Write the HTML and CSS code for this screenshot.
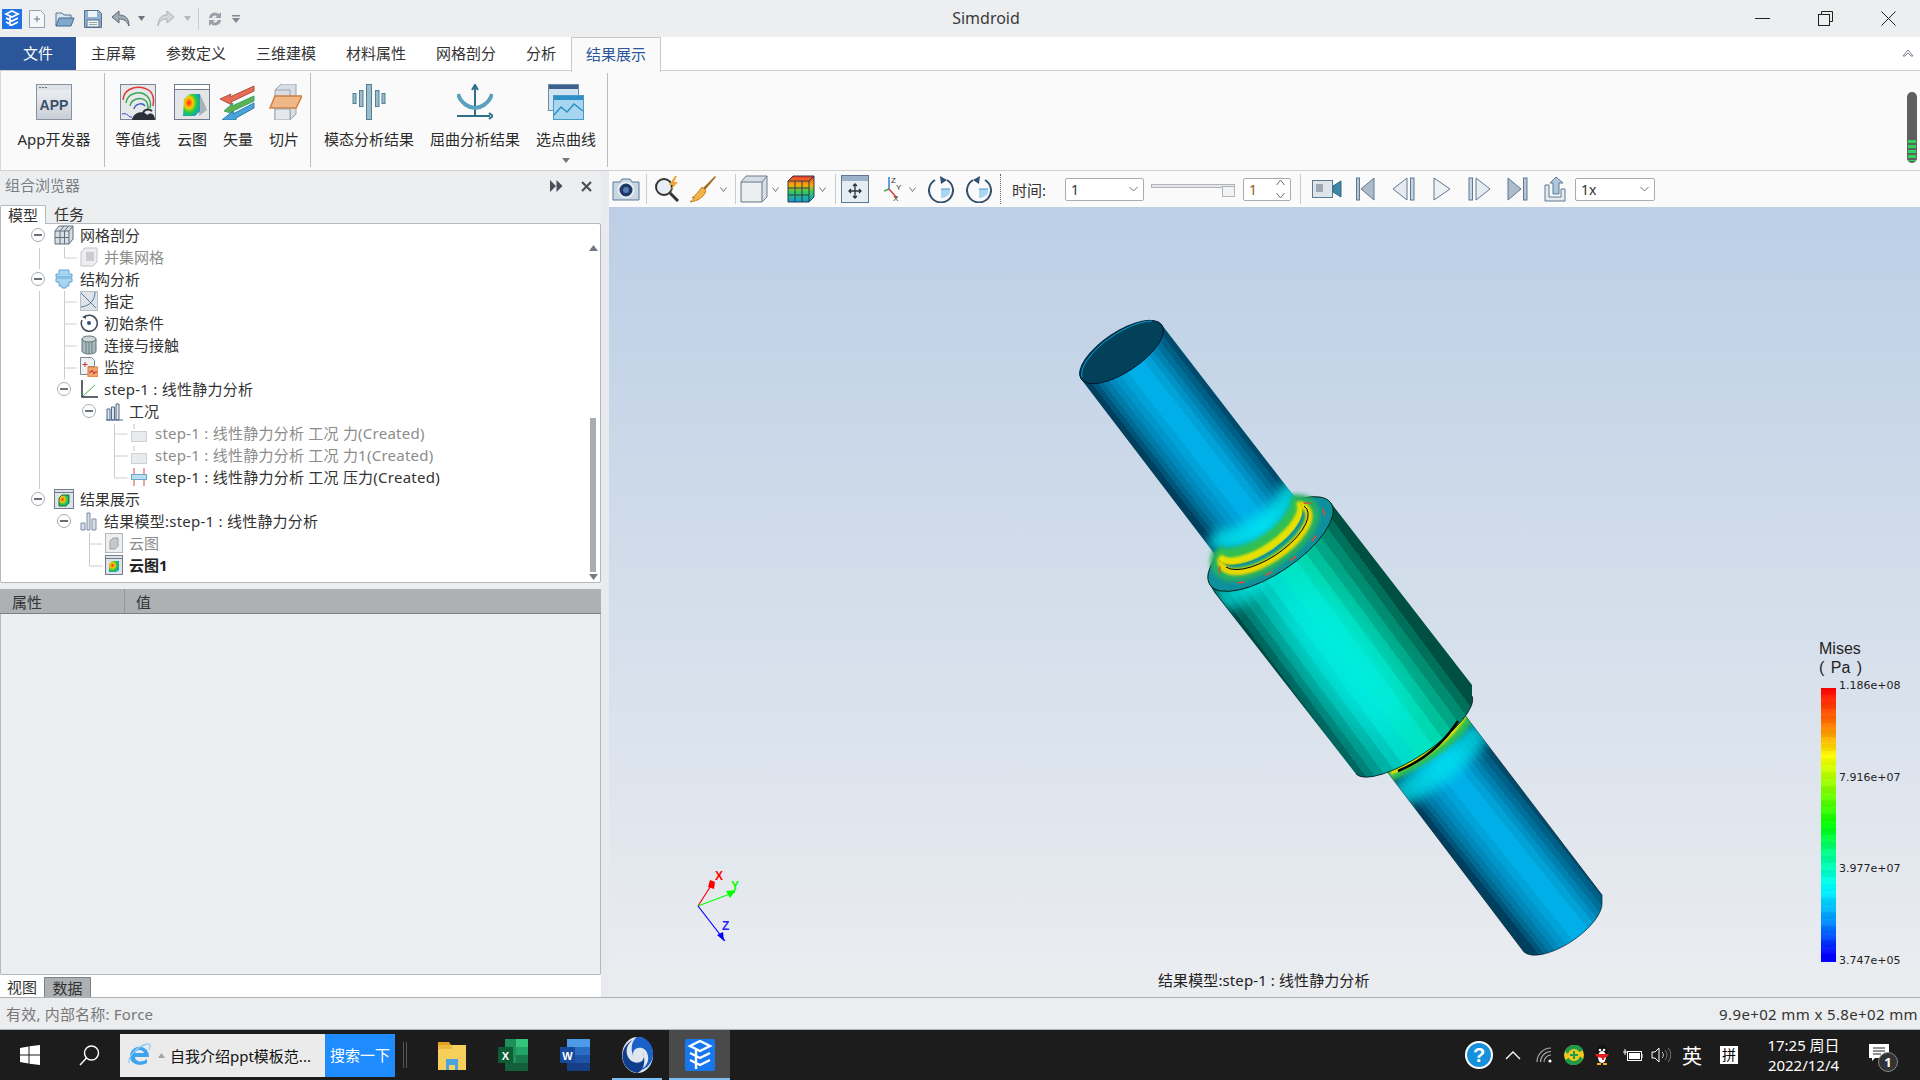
FILE: index.html
```html
<!DOCTYPE html>
<html lang="zh-CN">
<head>
<meta charset="utf-8">
<title>Simdroid</title>
<link rel="stylesheet" href="styles.css">
</head>
<body>
<div class="app">

<header class="titlebar">
  <div class="qat">
    <svg class="q0" width="20" height="20" viewBox="0 0 20 20"><rect width="20" height="20" fill="#1f72e8"/><path d="M4 5l6-3 6 3-6 3zM4 9l6 3 6-3M4 13l6 3 6-3M8 8v9" fill="none" stroke="#fff" stroke-width="1.8"/></svg>
    <svg class="q1" width="18" height="18" viewBox="0 0 18 18"><path d="M1.500 .5h11l4 4v13h-15z" fill="#f6f7f9" stroke="#8fa0b2"/><path d="M9 6v6M6 9h6" stroke="#66788c"/></svg>
    <svg class="q2" width="20" height="18" viewBox="0 0 20 18"><path d="M1 16V3h6l2 2h7v3" fill="#d8e4ef" stroke="#55728e"/><path d="M1 16l3-8h15l-3 8z" fill="#7fa8cc" stroke="#45688a"/></svg>
    <svg class="q3" width="18" height="18" viewBox="0 0 18 18"><path d="M.5.500h14l3 3v14H.500z" fill="#8fb0cf" stroke="#55728e"/><rect x="4" y="1" width="9" height="6" fill="#eef3f7"/><rect x="3" y="10" width="12" height="7" fill="#f4f6f8" stroke="#55728e"/><path d="M5 12.500h8M5 14.500h8" stroke="#8aa"/></svg>
    <svg class="q4" width="19" height="18" viewBox="0 0 19 18"><path d="M8 1L1 7l7 6V9c5 0 8 2 10 7 0-7-3-11-10-11z" fill="#9fa9b5" stroke="#5d6b7a"/></svg>
    <svg class="q5" width="7" height="5" viewBox="0 0 7 5"><path d="M0 0h7L3.500 5z" fill="#6b7480"/></svg>
    <svg class="q6" width="18" height="18" viewBox="0 0 18 18"><path d="M10 1l7 6-7 6V9C5 9 2 11 1 16c0-7 3-11 9-11z" fill="#d3d7dc" stroke="#aab1b9"/></svg>
    <svg class="q7" width="7" height="5" viewBox="0 0 7 5"><path d="M0 0h7L3.500 5z" fill="#b4b9bf"/></svg>
    <span class="q-sep"></span>
    <svg class="q8" width="16" height="18" viewBox="0 0 16 18"><path d="M2 8a6 6 0 0 1 10-4l2-2v6H8l2-2a3.500 3.500 0 0 0-5 2zM14 10a6 6 0 0 1-10 4l-2 2v-6h6l-2 2a3.500 3.500 0 0 0 5-2z" fill="#9aa1a8"/></svg>
    <svg class="q9" width="8" height="8" viewBox="0 0 8 8"><path d="M0 0h8v1.500H0zM0 3h8L4 8z" fill="#7f8790"/></svg>
  </div>
  <div class="app-title">Simdroid</div>
  <div class="win-controls">
    <span class="wc"><svg width="15" height="15" viewBox="0 0 15 15"><path d="M0 7.500h15" stroke="#222"/></svg></span>
    <span class="wc"><svg width="15" height="15" viewBox="0 0 15 15"><path d="M3.500 3V.500h11v10H12" fill="none" stroke="#222"/><rect x=".5" y="3.500" width="11" height="11" fill="none" stroke="#222"/></svg></span>
    <span class="wc"><svg width="15" height="15" viewBox="0 0 15 15"><path d="M.5.500l14 14M14.500.500l-14 14" stroke="#222"/></svg></span>
  </div>
</header>

<nav class="tabs">
  <div class="tab tab-file">文件</div>
  <div class="tab">主屏幕</div>
  <div class="tab">参数定义</div>
  <div class="tab">三维建模</div>
  <div class="tab">材料属性</div>
  <div class="tab">网格剖分</div>
  <div class="tab">分析</div>
  <div class="tab tab-active">结果展示</div>
  <svg class="collapse" width="12" height="9" viewBox="0 0 12 9"><path d="M1 8l5-6 5 6-2 0-3-3-3 3z" fill="#fff" stroke="#77808a"/></svg>
</nav>

<section class="ribbon">
  <div class="rgroup g1">
    <div class="ritem">
      <svg class="ricon" width="36" height="36" viewBox="0 0 36 36"><defs><linearGradient id="appg" x1="0" y1="0" x2="0" y2="1"><stop offset="0" stop-color="#f2f4f6"/><stop offset="1" stop-color="#c9ced6"/></linearGradient></defs><rect x=".5" y=".5" width="35" height="35" fill="url(#appg)" stroke="#8793a3"/><rect x="1" y="1" width="34" height="5" fill="#dfe3e8"/><path d="M3 3.500h2M6 3.500h2M9 3.500h2" stroke="#6b7684"/><text x="18" y="26" class="app-glyph">APP</text></svg>
      <span>App开发器</span>
    </div>
  </div>
  <div class="rgroup g2">
    <div class="ritem">
      <svg class="ricon" width="36" height="36" viewBox="0 0 36 36"><rect x=".5" y=".5" width="35" height="35" fill="#e6e8ea" stroke="#7a8796"/><path d="M3 16C4 3 20 0 30 7c4 4 4 10 3 15" fill="none" stroke="#e23a32" stroke-width="1.500"/><path d="M6 19C7 9 20 6 27 12c3 3 4 8 3 12" fill="none" stroke="#3aa654" stroke-width="1.500"/><path d="M10 22c1-7 11-10 16-5 2 2 2 6 2 9" fill="none" stroke="#3aa654" stroke-width="1.500"/><path d="M14 25c1-5 8-7 11-3" fill="none" stroke="#3a5ec8" stroke-width="1.500"/><path d="M2 30c5-2 7 4 10 3" fill="none" stroke="#3a3ec8"/><path d="M12 36c1-8 12-10 15-5 3-3 8-2 8 5z" fill="#2b2f38"/><path d="M23 30c0-4 5-6 9-3" fill="none" stroke="#2b2f38" stroke-width="2"/></svg>
      <span>等值线</span>
    </div>
    <div class="ritem narrow">
      <svg class="ricon" width="36" height="36" viewBox="0 0 36 36"><defs><radialGradient id="cloudg" cx=".35" cy=".4" r=".8"><stop offset="0" stop-color="#f22"/><stop offset=".3" stop-color="#fc0"/><stop offset=".55" stop-color="#2c4"/><stop offset="1" stop-color="#18f"/></radialGradient></defs><rect x=".5" y=".5" width="35" height="35" fill="#e3e5e8" stroke="#6f7d8e"/><rect x="1" y="1" width="34" height="4" fill="#fff"/><path d="M1 5.500h34" stroke="#6f7d8e"/><path d="M26 10l7 16-8 6z" fill="#aab0b7"/><path d="M10 15l6-5h10v17l-5 5H9z" fill="url(#cloudg)"/></svg>
      <span>云图</span>
    </div>
    <div class="ritem narrow">
      <svg class="ricon" width="36" height="36" viewBox="0 0 36 36"><path d="M0 15l11-5-1 3 24-11v5L11 18l1 3z" fill="#e96a55" stroke="#a54"/><path d="M4 27l9-8-1 3 22-10v5L13 27l1 3z" fill="#5fb04f" stroke="#3a7"/><path d="M2 36l11-9v3l21-11v5L16 34v2z" fill="#4aa4dc" stroke="#37a"/></svg>
      <span>矢量</span>
    </div>
    <div class="ritem narrow">
      <svg class="ricon cut" width="36" height="36" viewBox="0 0 36 36"><path d="M9 6l6-6h15v30l-6 6H9z" fill="#d8dde3" stroke="#9aa5b0"/><path d="M9 6h15v30" fill="none" stroke="#9aa5b0"/><path d="M9 12L4 24h26l6-12z" fill="#f0b888" stroke="#d07f3f" stroke-width="1.500"/><path d="M9 25h15v11H9z" fill="#e5e8ec" stroke="#9aa5b0"/></svg>
      <span>切片</span>
    </div>
  </div>
  <div class="rgroup g3">
    <div class="ritem">
      <svg class="ricon" width="36" height="36" viewBox="0 0 36 36"><g fill="#9dbccb" stroke="#4f8097"><rect x="15.500" y=".5" width="5" height="35"/><rect x="8.500" y="6.500" width="3.500" height="16"/><rect x="24.500" y="6.500" width="3.500" height="16"/><rect x="2" y="9.500" width="3" height="10"/><rect x="31" y="9.500" width="3" height="10"/></g></svg>
      <span>模态分析结果</span>
    </div>
    <div class="ritem">
      <svg class="ricon" width="36" height="36" viewBox="0 0 36 36"><path d="M18 33V2M15 6l3-5 3 5" fill="none" stroke="#2c6f86" stroke-width="2"/><path d="M0 32h33M32 29l4 3-4 3" fill="none" stroke="#2c6f86" stroke-width="2"/><path d="M1 10c3 10 12 14 17 14s14-4 17-14" fill="none" stroke="#5aa0c0" stroke-width="4"/></svg>
      <span>屈曲分析结果</span>
    </div>
    <div class="ritem">
      <svg class="ricon" width="36" height="36" viewBox="0 0 36 36"><rect x=".5" y=".5" width="30" height="26" fill="#cfe3f3" stroke="#6c8cab"/><rect x="1" y="1" width="29" height="4" fill="#3c5f8e"/><rect x="5.500" y="11.500" width="30" height="24" fill="#a6d6f0" stroke="#4a9ac8"/><rect x="6" y="12" width="29" height="4" fill="#2f8fc8"/><path d="M6 31l7-8 6 5 7-8 9 7" fill="none" stroke="#2f8fc8" stroke-width="1.500"/></svg>
      <span>选点曲线</span>
      <svg class="more" width="8" height="5" viewBox="0 0 8 5"><path d="M0 0h8L4 5z" fill="#777"/></svg>
    </div>
  </div>
  <div class="pill"><i></i></div>
</section>

<main class="main">
  <aside class="left">
    <div class="browser-head">
      <span class="browser-title">组合浏览器</span>
      <svg width="13" height="12" viewBox="0 0 13 12"><path d="M0 0l6 6-6 6zM6.500 0l6 6-6 6z" fill="#4a5058"/></svg>
      <svg class="head-x" width="11" height="11" viewBox="0 0 11 11"><path d="M1 1l9 9M10 1l-9 9" stroke="#4a5058" stroke-width="2.200"/></svg>
    </div>
    <div class="mini-tabs">
      <span class="mini-tab on">模型</span><span class="mini-tab">任务</span>
    </div>
    <div class="tree">
      <svg class="tree-lines" width="590" height="360" viewBox="0 223 590 360"><path d="M38.500 247v21M38.500 290v198M63.500 246v11h12M63.500 290v88M63.500 301h12M63.500 323h12M63.500 345h12M63.500 367h12M113.500 423v54h13M113.500 433h13M113.500 455h13M88.500 532v33h13M88.500 543h13" fill="none" stroke="#c9ccd0"/></svg>

      <div class="row l1"><i class="exp"></i>
        <svg class="ti" width="20" height="20" viewBox="0 0 20 20"><path d="M1 6l4-5h14v13l-4 5H1z" fill="#d9dee3" stroke="#5f6d7c"/><path d="M1 6h14v13M15 6l4-5M6 6v13M10.500 6v13M1 12.500h14M6 6l4-5M10.500 6l4-5" fill="none" stroke="#5f6d7c"/></svg>
        <span>网格剖分</span></div>
      <div class="row l2 dim">
        <svg class="ti" width="18" height="20" viewBox="0 0 18 20"><path d="M1 5l4-4h12v14l-4 4H1z" fill="#eee" stroke="#c0c4c8"/><rect x="6" y="5" width="8" height="9" fill="#c9cdd1"/></svg>
        <span>并集网格</span></div>
      <div class="row l1"><i class="exp"></i>
        <svg class="ti" width="20" height="20" viewBox="0 0 20 20"><path d="M5 1h10v4h3v3H2V5h3zM2 9h16v4h-3v4h-3v2H8v-2H5v-4H2z" fill="#a9d4ef" stroke="#60a8d8"/></svg>
        <span>结构分析</span></div>
      <div class="row l2">
        <svg class="ti" width="18" height="20" viewBox="0 0 18 20"><rect x=".5" y=".5" width="17" height="19" fill="#dfe3e8" stroke="#b7bfc8"/><path d="M1 2l15 15M15 1c0 8-5 14-14 15" fill="none" stroke="#4d7fa8"/></svg>
        <span>指定</span></div>
      <div class="row l2">
        <svg class="ti" width="18" height="20" viewBox="0 0 18 20"><path d="M6 3a8 8 0 1 1-4 4" fill="none" stroke="#3e4a5c" stroke-width="1.500"/><circle cx="9" cy="10" r="2" fill="#2f4f7f"/><path d="M2 4l4-2v4z" fill="#3e4a5c"/></svg>
        <span>初始条件</span></div>
      <div class="row l2">
        <svg class="ti" width="18" height="20" viewBox="0 0 18 20"><path d="M2 4v12c0 4 14 4 14 0V4" fill="#a9b8bc" stroke="#5f7278"/><ellipse cx="9" cy="4" rx="7" ry="3" fill="#cdd6d8" stroke="#5f7278"/><path d="M6 7v11M9 7v12M12 7v11" stroke="#6f8388"/></svg>
        <span>连接与接触</span></div>
      <div class="row l2">
        <svg class="ti" width="18" height="20" viewBox="0 0 18 20"><path d="M.5.500h11l3 3v6h-6v8H.5z" fill="#eef0f3" stroke="#7c8894"/><path d="M5 5v5M2.500 7.500h5" stroke="#c33"/><rect x="8" y="10" width="10" height="10" fill="#f4a36c" stroke="#d97a3a"/><path d="M9 15h2l1-2 2 4 1-2h2" fill="none" stroke="#a33"/></svg>
        <span>监控</span></div>
      <div class="row l2"><i class="exp"></i>
        <svg class="ti" width="18" height="20" viewBox="0 0 18 20"><path d="M2 1v17h16" fill="none" stroke="#2a3440" stroke-width="1.500"/><path d="M3 17L15 6" stroke="#4caf50"/></svg>
        <span class="wide">step-1 : 线性静力分析</span></div>
      <div class="row l3"><i class="exp"></i>
        <svg class="ti" width="18" height="20" viewBox="0 0 18 20"><path d="M1 19h17M2 8h3v11H2zM6.500 6h3v13h-3zM11 3h3v16h-3z" fill="#dfe5ec" stroke="#4f6a88"/></svg>
        <span>工况</span></div>
      <div class="row l4 dim">
        <svg class="ti t16" width="16" height="20" viewBox="0 0 16 20"><path d="M3 1v5" stroke="#c0c4c8"/><rect x=".5" y="8.500" width="15" height="10" fill="#e8eaec" stroke="#cdd0d4"/></svg>
        <span class="wide">step-1 : 线性静力分析 工况 力(Created)</span></div>
      <div class="row l4 dim">
        <svg class="ti t16" width="16" height="20" viewBox="0 0 16 20"><path d="M3 1v5" stroke="#c0c4c8"/><rect x=".5" y="8.500" width="15" height="10" fill="#e8eaec" stroke="#cdd0d4"/></svg>
        <span class="wide">step-1 : 线性静力分析 工况 力1(Created)</span></div>
      <div class="row l4">
        <svg class="ti t16" width="16" height="20" viewBox="0 0 16 20"><path d="M3 1v6M13 1v6M3 13v6M13 13v6" stroke="#d84a3a"/><rect x=".5" y="7.500" width="15" height="5" fill="#bcdcf0" stroke="#6ba8d0"/></svg>
        <span class="wide">step-1 : 线性静力分析 工况 压力(Created)</span></div>
      <div class="row l1"><i class="exp"></i>
        <svg class="ti" width="20" height="20" viewBox="0 0 20 20"><rect x=".5" y=".5" width="19" height="19" fill="#dfe2e6" stroke="#6f7d8e"/><path d="M1 3.500h18" stroke="#6f7d8e"/><path d="M5 9l3-3h7v8l-3 3H5z" fill="url(#cloudg)" stroke="#272"/></svg>
        <span>结果展示</span></div>
      <div class="row l2"><i class="exp"></i>
        <svg class="ti" width="18" height="20" viewBox="0 0 18 20"><path d="M1 12h4v7H1zM7 2h3v17H7zM12 8h4v11h-4z" fill="#d8dee5" stroke="#7c8fa3"/></svg>
        <span class="wide">结果模型:step-1 : 线性静力分析</span></div>
      <div class="row l3 dim">
        <svg class="ti" width="18" height="20" viewBox="0 0 18 20"><rect x=".5" y=".5" width="17" height="19" fill="#eceeef" stroke="#b2b6ba"/><path d="M5 8l3-3h5v8l-3 3H5z" fill="#c6c9cc" stroke="#9ea2a6"/></svg>
        <span>云图</span></div>
      <div class="row l3 strong">
        <svg class="ti" width="18" height="20" viewBox="0 0 18 20"><rect x=".5" y=".5" width="17" height="19" fill="#dfe2e6" stroke="#6f7d8e"/><path d="M1 3.500h16" stroke="#6f7d8e"/><path d="M4 9l3-3h7v9l-3 2H4z" fill="url(#cloudg)"/></svg>
        <span>云图1</span></div>

      <svg class="sb-up" width="9" height="6" viewBox="0 0 9 6"><path d="M4.500 0l4.500 6H0z" fill="#6f7a86"/></svg>
      <i class="sb-thumb"></i>
      <svg class="sb-down" width="9" height="6" viewBox="0 0 9 6"><path d="M4.500 6L9 0H0z" fill="#6f7a86"/></svg>
    </div>
    <div class="prop-head"><span class="prop-a">属性</span><span class="prop-b">值</span></div>
    <div class="prop-body"></div>
    <div class="bottom-tabs"><span class="btab">视图</span><span class="btab on">数据</span></div>
  </aside>

  <section class="work">
    <div class="toolbar">
      <svg class="tb m3" width="28" height="24" viewBox="0 0 28 24"><path d="M1 5h7l2-3h8l2 3h7v18H1z" fill="#c8d6e6" stroke="#5f7892"/><circle cx="14" cy="13" r="7.500" fill="#1f3a68" stroke="#e8eef4" stroke-width="2"/><circle cx="14" cy="13" r="3" fill="#5a7cb0"/></svg>
      <i class="tsep m6"></i>
      <svg class="tb m6" width="29" height="26" viewBox="0 0 29 26"><circle cx="11" cy="11" r="8" fill="#e6edf3" stroke="#333" stroke-width="2"/><path d="M17 17l8 8" stroke="#333" stroke-width="3"/><path d="M22 0l-6 9h4l-3 6 8-9h-4l3-6z" fill="#f0a43a"/></svg>
      <svg class="tb m7" width="28" height="28" viewBox="0 0 28 28"><path d="M26 1l1 1-11 13-2-2z" fill="#a06a20"/><path d="M13 12l4 4c-2 6-8 10-16 11 3-2 5-5 5-5l-3 1c3-2 6-6 10-11z" fill="#f2b34a" stroke="#c58420"/></svg>
      <svg class="tar m3" width="7" height="7" viewBox="0 0 7 7"><path d="M.5 1.500l3 4 3-4" fill="none" stroke="#6a7480"/></svg>
      <i class="tsep m8"></i>
      <svg class="tb m4" width="28" height="28" viewBox="0 0 28 28"><path d="M1 7l5-6h21v21l-5 5H1z" fill="#d8dde3" stroke="#6f7d8e"/><path d="M1 7h21v20M22 7l5-6" fill="none" stroke="#6f7d8e"/><rect x="2" y="8" width="19" height="18" fill="#eceff2"/></svg>
      <svg class="tar m4" width="7" height="7" viewBox="0 0 7 7"><path d="M.5 1.500l3 4 3-4" fill="none" stroke="#6a7480"/></svg>
      <svg class="tb m8" width="28" height="28" viewBox="0 0 28 28"><defs><linearGradient id="meshg" x1="0" y1="0" x2="0" y2="1"><stop offset="0" stop-color="#e33"/><stop offset=".35" stop-color="#fa0"/><stop offset=".6" stop-color="#3c5"/><stop offset="1" stop-color="#19d"/></linearGradient></defs><path d="M1 6l5-5h21v21l-5 5H1z" fill="url(#meshg)" stroke="#2d3a4a"/><path d="M1 6h21v21M22 6l5-5M8 6v21M15 6v21M1 13h21M1 20h21" fill="none" stroke="#2d3a4a"/></svg>
      <svg class="tar m4" width="7" height="7" viewBox="0 0 7 7"><path d="M.5 1.500l3 4 3-4" fill="none" stroke="#6a7480"/></svg>
      <i class="tsep m9"></i>
      <svg class="tb m5" width="28" height="28" viewBox="0 0 28 28"><rect x=".5" y=".5" width="27" height="27" fill="#e5ecf2" stroke="#5f7892"/><rect x="1" y="1" width="26" height="5" fill="#9db2c8"/><path d="M14 9v14M8 16h12M12 11l2-2 2 2M12 21l2 2 2-2M10 14l-2 2 2 2M18 14l2 2-2 2" fill="none" stroke="#2a3440" stroke-width="1.300"/></svg>
      <svg class="tb m13" width="21" height="28" viewBox="0 0 21 28"><path d="M7 14V2" stroke="#2a7fd8" stroke-width="1.500"/><path d="M7 14l-5 2" stroke="#3cab4a" stroke-width="1.500"/><path d="M7 14l8 9" stroke="#d83a3a" stroke-width="1.500"/><text x="9" y="8" class="axis-l">Z</text><text x="14" y="15" class="axis-l">Y</text><text x="11" y="26" class="axis-l">X</text></svg>
      <svg class="tar m6" width="7" height="7" viewBox="0 0 7 7"><path d="M.5 1.500l3 4 3-4" fill="none" stroke="#6a7480"/></svg>
      <svg class="tb m12" width="26" height="28" viewBox="0 0 26 28"><path d="M7 5a12 12 0 1 0 12 0" fill="none" stroke="#33506e" stroke-width="2"/><path d="M12 1l7 4-6 4z" fill="#33506e"/><path d="M13 14h9v4c-2 3-5 5-9 5z" fill="#a8d6f2"/><path d="M13 14h9" stroke="#4a9ac8"/></svg>
      <svg class="tb m12" width="26" height="28" viewBox="0 0 26 28"><path d="M19 5a12 12 0 1 1-12 0" fill="none" stroke="#33506e" stroke-width="2"/><path d="M14 1L7 5l6 4z" fill="#33506e"/><path d="M13 14h9v4c-2 3-5 5-9 5z" fill="#a8d6f2"/><path d="M13 14h9" stroke="#4a9ac8"/></svg>
      <i class="tsep dotted m8"></i>
      <span class="time-label m11">时间:</span>
      <div class="combo c79 m20"><span>1</span><svg width="9" height="6" viewBox="0 0 9 6"><path d="M.5 1l4 4 4-4" fill="none" stroke="#6a7480"/></svg></div>
      <div class="slider m7"><i class="track"></i><i class="handle"></i></div>
      <div class="combo spin m8"><span>1</span><svg width="9" height="20" viewBox="0 0 9 20"><path d="M.5 6l4-5 4 5M.5 14l4 5 4-5" fill="none" stroke="#6a7480"/></svg></div>
      <i class="tsep m9"></i>
      <svg class="tb m11" width="30" height="22" viewBox="0 0 30 22"><rect x=".5" y="2.500" width="20" height="17" fill="#dfe4ea" stroke="#5f7892"/><rect x="4" y="6" width="7" height="8" fill="#9da8b4"/><path d="M21 8l8-5v16l-8-5z" fill="#3f86a8" stroke="#2f6a88"/></svg>
      <svg class="tb m14" width="19" height="24" viewBox="0 0 19 24"><rect x=".5" y="1" width="3" height="22" fill="#b7c4d2" stroke="#5f7892"/><path d="M18 1v22L5 12z" fill="#aebbc9" stroke="#5f7892"/></svg>
      <svg class="tb m17" width="23" height="24" viewBox="0 0 23 24"><path d="M15 1v22L1 12z" fill="#e6ebf0" stroke="#5f7892"/><rect x="18.500" y="1" width="3.500" height="22" fill="#c8d4e0" stroke="#5f7892"/></svg>
      <svg class="tb m18" width="18" height="24" viewBox="0 0 18 24"><path d="M1 1v22l16-11z" fill="#eef1f4" stroke="#5f7892"/></svg>
      <svg class="tb m17" width="23" height="24" viewBox="0 0 23 24"><rect x="1" y="1" width="3.500" height="22" fill="#c8d4e0" stroke="#5f7892"/><path d="M8 1v22l14-11z" fill="#e6ebf0" stroke="#5f7892"/></svg>
      <svg class="tb m16" width="21" height="24" viewBox="0 0 21 24"><path d="M1 1v22l13-11z" fill="#aebbc9" stroke="#5f7892"/><rect x="16.500" y="1" width="3.500" height="22" fill="#b7c4d2" stroke="#5f7892"/></svg>
      <svg class="tb m16" width="24" height="26" viewBox="0 0 24 26"><path d="M1 9v16h20V13h-4v8H5V9z" fill="#e4eaf0" stroke="#5f7892"/><path d="M9 18V7H6l6-6 7 6h-4v11z" fill="#aec6dc" stroke="#5f7892"/></svg>
      <div class="combo c80 m7"><span>1x</span><svg width="9" height="6" viewBox="0 0 9 6"><path d="M.5 1l4 4 4-4" fill="none" stroke="#6a7480"/></svg></div>
    </div>

    <div class="viewport">
      <svg class="scene" width="1311" height="789" viewBox="609 208 1311 789">
        <defs>
          <linearGradient id="c1" gradientUnits="userSpaceOnUse" x1="1086" y1="385" x2="1162" y2="326">
            <stop offset="0" stop-color="#003f5e"/><stop offset=".05" stop-color="#003f5e"/><stop offset=".05" stop-color="#00567a"/><stop offset=".1" stop-color="#00567a"/><stop offset=".1" stop-color="#006a92"/><stop offset=".15" stop-color="#006a92"/><stop offset=".15" stop-color="#007ba8"/><stop offset=".21" stop-color="#007ba8"/><stop offset=".21" stop-color="#0089ba"/><stop offset=".27" stop-color="#0089ba"/><stop offset=".27" stop-color="#0096ca"/><stop offset=".34" stop-color="#0096ca"/><stop offset=".34" stop-color="#00a2da"/><stop offset=".42" stop-color="#00a2da"/><stop offset=".42" stop-color="#00aee8"/><stop offset=".62" stop-color="#00aee8"/><stop offset=".62" stop-color="#00a2d8"/><stop offset=".7" stop-color="#00a2d8"/><stop offset=".7" stop-color="#0092c4"/><stop offset=".76" stop-color="#0092c4"/><stop offset=".76" stop-color="#0082b0"/><stop offset=".82" stop-color="#0082b0"/><stop offset=".82" stop-color="#00709a"/><stop offset=".88" stop-color="#00709a"/><stop offset=".88" stop-color="#005f86"/><stop offset=".94" stop-color="#005f86"/><stop offset=".94" stop-color="#004b6c"/><stop offset="1" stop-color="#004b6c"/>
          </linearGradient>
          <linearGradient id="c3" href="#c1" gradientUnits="userSpaceOnUse" x1="1388" y1="775" x2="1463" y2="715"/>
          <linearGradient id="b1" gradientUnits="userSpaceOnUse" x1="1212" y1="592" x2="1331" y2="504">
            <stop offset="0" stop-color="#004a44"/><stop offset=".04" stop-color="#004a44"/><stop offset=".04" stop-color="#006660"/><stop offset=".09" stop-color="#006660"/><stop offset=".09" stop-color="#008278"/><stop offset=".14" stop-color="#008278"/><stop offset=".14" stop-color="#009a8e"/><stop offset=".2" stop-color="#009a8e"/><stop offset=".2" stop-color="#00b2a6"/><stop offset=".27" stop-color="#00b2a6"/><stop offset=".27" stop-color="#00c8bc"/><stop offset=".34" stop-color="#00c8bc"/><stop offset=".34" stop-color="#00dccc"/><stop offset=".44" stop-color="#00dccc"/><stop offset=".44" stop-color="#00e4c4"/><stop offset=".58" stop-color="#00e4c4"/><stop offset=".58" stop-color="#00d8b0"/><stop offset=".66" stop-color="#00d8b0"/><stop offset=".66" stop-color="#00c09a"/><stop offset=".74" stop-color="#00c09a"/><stop offset=".74" stop-color="#00a686"/><stop offset=".81" stop-color="#00a686"/><stop offset=".81" stop-color="#008c70"/><stop offset=".88" stop-color="#008c70"/><stop offset=".88" stop-color="#00705a"/><stop offset=".94" stop-color="#00705a"/><stop offset=".94" stop-color="#005042"/><stop offset="1" stop-color="#005042"/>
          </linearGradient>
          <filter id="blur6" x="-30%" y="-30%" width="160%" height="160%"><feGaussianBlur stdDeviation="6"/></filter>
          <filter id="blur2" x="-30%" y="-30%" width="160%" height="160%"><feGaussianBlur stdDeviation="2"/></filter>
          <filter id="blur1" x="-30%" y="-30%" width="160%" height="160%"><feGaussianBlur stdDeviation="1"/></filter>
          <filter id="blur16" x="-50%" y="-50%" width="200%" height="200%"><feGaussianBlur stdDeviation="16"/></filter>
          <clipPath id="clipU"><path d="M1081 380L1220 562A47 20 -34 0 0 1300 505L1162 326Z"/></clipPath>
          <clipPath id="clipL"><path d="M1370 750L1524 953A47 20 -34 0 0 1602 903V896L1445 690Z"/></clipPath>
          <clipPath id="clipB"><path d="M1210 586L1356 775A70 22 -34 0 0 1472 697V686L1331 504Z"/></clipPath>
        </defs>

        <!-- lower shaft -->
        <path d="M1370 750L1524 953A47 20 -34 0 0 1602 903V896L1445 690Z" fill="url(#c3)" stroke="#023" stroke-width=".7"/>
        <g clip-path="url(#clipL)">
          <path d="M1392 800Q1450 772 1482 728" fill="none" stroke="#00e8f0" stroke-width="26" opacity=".7" filter="url(#blur6)"/>
          <path d="M1384 776Q1445 748 1466 716" fill="none" stroke="#30c050" stroke-width="18" filter="url(#blur2)"/>
          <path d="M1390 772Q1445 748 1464 714" fill="none" stroke="#e6e000" stroke-width="8" filter="url(#blur1)"/>
        </g>

        <!-- middle section -->
        <path d="M1210 586L1214 593L1356 775A70 22 -34 0 0 1472 697V686L1331 504Z" fill="url(#b1)"/>
        <g clip-path="url(#clipB)">
          <ellipse cx="1345" cy="660" rx="30" ry="90" transform="rotate(-38 1345 660)" fill="#00f0e6" opacity=".75" filter="url(#blur16)"/>
          <ellipse cx="1240" cy="590" rx="34" ry="14" transform="rotate(-34 1240 590)" fill="#00f0f0" opacity=".6" filter="url(#blur6)"/>
        </g>
        <path d="M1356 775A70 22 -34 0 0 1472 697" fill="none" stroke="#012" stroke-width=".8"/>
        <path d="M1398 772Q1435 757 1458 722" fill="none" stroke="#000" stroke-width="2.500"/>
        <ellipse cx="1270.500" cy="545" rx="73" ry="29" transform="rotate(-34 1270.500 545)" fill="#0d8f9e" stroke="#021" stroke-width=".9"/>
        <ellipse cx="1265" cy="539" rx="55" ry="24" transform="rotate(-34 1265 539)" fill="none" stroke="#28b060" stroke-width="14" filter="url(#blur2)"/>
        <ellipse cx="1265" cy="539" rx="51" ry="22" transform="rotate(-34 1265 539)" fill="none" stroke="#e8d800" stroke-width="7" filter="url(#blur1)"/>
        <ellipse cx="1272" cy="544" rx="61" ry="25" transform="rotate(-34 1272 544)" fill="none" stroke="#e0502a" stroke-width="1.500" stroke-dasharray="7 22"/>

        <!-- upper shaft -->
        <path d="M1081 380L1220 562A47 20 -34 0 0 1300 505L1162 326Z" fill="url(#c1)"/>
        <g clip-path="url(#clipU)">
          <path d="M1212 538A47 20 -34 0 0 1288 482" fill="none" stroke="#00e8f0" stroke-width="22" opacity=".8" filter="url(#blur6)"/>
          <path d="M1216 552A47 20 -34 0 0 1296 496" fill="none" stroke="#30c050" stroke-width="14" filter="url(#blur2)"/>
          <path d="M1219 558A47 20 -34 0 0 1299 502" fill="none" stroke="#e6e000" stroke-width="8" filter="url(#blur1)"/>
        </g>
        <path d="M1226 568A47 20 -34 0 0 1304 507" fill="none" stroke="#000" stroke-width="1"/>
        <ellipse cx="1121.500" cy="353" rx="48.600" ry="20" transform="rotate(-33.700 1121.500 353)" fill="#03405a" stroke="#012" stroke-width=".8"/>
        <path d="M1082 378A48.600 20 -33.700 0 1 1152 322" fill="none" stroke="#00a0d8" stroke-width="1"/>

        <!-- triad -->
        <path d="M698 907L712 885" stroke="#f00" stroke-width="1.200"/><path d="M710 881l5 2-1 7-6-2z" fill="#f00"/>
        <path d="M698 907L735 893" stroke="#0f0" stroke-width="1.200"/><path d="M726 892l10-1-6 8z" fill="#0f0"/>
        <path d="M698 907L725 942" stroke="#00f" stroke-width="1.200"/><path d="M717 936l6-3 1 9z" fill="#00f"/>
      </svg>
      <span class="axis ax-x">X</span>
      <span class="axis ax-y">Y</span>
      <span class="axis ax-z">Z</span>

      <div class="legend">
        <div class="legend-title">Mises<br>( Pa )</div>
        <div class="legend-body">
          <div class="legend-bar"></div>
          <div class="legend-vals"><span>1.186e+08</span><span>7.916e+07</span><span>3.977e+07</span><span>3.747e+05</span></div>
        </div>
      </div>
      <div class="caption">结果模型:step-1 : 线性静力分析</div>
    </div>
  </section>
</main>

<footer class="status">
  <span class="st-left">有效, 内部名称: Force</span>
  <span class="st-right">9.9e+02 mm x 5.8e+02 mm</span>
</footer>

<div class="taskbar">
  <svg class="tk-win" width="20" height="20" viewBox="0 0 20 20"><path d="M0 3l8.500-1.500V9.500H0zM9.500 1.300L20 0v9.500H9.500zM0 10.500h8.500v8L0 17zM9.500 10.500H20V20L9.500 18.700z" fill="#fff"/></svg>
  <svg class="tk-search" width="21" height="21" viewBox="0 0 21 21"><circle cx="12.500" cy="8" r="7" fill="none" stroke="#fff" stroke-width="1.400"/><path d="M7.500 13L1 20" stroke="#fff" stroke-width="1.400"/></svg>
  <div class="searchbox">
    <svg class="ie" width="23" height="24" viewBox="0 0 23 24"><path d="M2 14a9.500 9.500 0 0 1 18-5 9 9 0 0 1 1 5H7c0 5 8 6 12 2v4c-7 4-17 1-17-6zM7 10h9c-1-4-8-4-9 0z" fill="#3ea4ee"/><path d="M1 20C0 14 8 4 19 1c3-1 4 2 2 6" fill="none" stroke="#8fcdf8" stroke-width="1.300"/></svg>
    <svg class="ie-arrow" width="7" height="5" viewBox="0 0 7 5"><path d="M3.500 0L7 5H0z" fill="#a4a4a4"/></svg>
    <span class="sb-text">自我介绍ppt模板范...</span>
    <span class="sb-btn">搜索一下</span>
  </div>
  <i class="tk-sep"></i>
  <div class="tk-app a1"><svg width="28" height="30" viewBox="0 0 28 30"><path d="M0 2h11l2 3h-13z" fill="#e0a020"/><rect y="5" width="28" height="25" fill="#f7cf5c"/><path d="M0 5h13l2 4H0z" fill="#f0b83a"/><path d="M8 30V19h12v11h-3v-5h-6v5z" fill="#4aa3df"/></svg></div>
  <div class="tk-app a2"><svg width="30" height="32" viewBox="0 0 30 32"><rect x="7" y="0" width="23" height="32" fill="#1f8f5a"/><rect x="18" y="0" width="12" height="8" fill="#34c47c"/><rect x="18" y="8" width="12" height="8" fill="#22a566"/><rect x="18" y="16" width="12" height="8" fill="#187a4c"/><rect x="7" y="24" width="23" height="8" fill="#145f3c"/><rect y="8" width="15" height="16" fill="#0e5c36"/><text x="7.500" y="21" class="tile-l">X</text></svg></div>
  <div class="tk-app a3"><svg width="30" height="32" viewBox="0 0 30 32"><rect x="7" y="0" width="23" height="32" fill="#2b6cc4"/><rect x="7" y="0" width="23" height="8" fill="#4d9ae6"/><rect x="7" y="16" width="23" height="8" fill="#1f55a8"/><rect x="7" y="24" width="23" height="8" fill="#163f86"/><rect y="8" width="15" height="16" fill="#174a9c"/><text x="7.500" y="21" class="tile-l">W</text></svg></div>
  <div class="tk-app a4"><svg width="31" height="36" viewBox="0 0 31 36"><ellipse cx="15.500" cy="18" rx="15.500" ry="18" fill="#dfe6ee"/><path d="M15 0C30 0 34 16 29 25c-3 6-10 9-13 8 8-2 11-8 10-14-1-7-6-9-10-8-5 1-6 6-4 9C9 16 8 5 15 0z" fill="#1b60c8"/><path d="M15 36C2 34-3 20 3 10 5 7 8 4 11 3 5 7 3 14 6 20c3 6 10 7 14 4 3-3 2-7 0-9 4 5 3 19-5 21z" fill="#0f3f8c"/></svg><i class="under"></i></div>
  <div class="tk-app a5"><svg width="30" height="32" viewBox="0 0 30 32"><rect width="30" height="32" rx="2" fill="#1877ee"/><path d="M5 7l10-5 10 5-10 5zM5 14l10 5 10-5M5 21l10 5 10-5M11 10v20" fill="none" stroke="#fff" stroke-width="2.400"/></svg><i class="under"></i></div>

  <div class="tray">
    <svg class="t-help" width="28" height="28" viewBox="0 0 28 28"><circle cx="14" cy="14" r="13" fill="#1790dc" stroke="#fff" stroke-width="2"/><text x="14" y="21" class="help-q">?</text></svg>
    <svg class="t-chev" width="16" height="9" viewBox="0 0 16 9"><path d="M1 8l7-7 7 7" fill="none" stroke="#fff" stroke-width="1.300"/></svg>
    <svg class="t-wifi" width="16" height="16" viewBox="0 0 16 16"><path d="M1 15A14 14 0 0 1 15 1M4.500 15A10.500 10.500 0 0 1 15 4.500M8 15a7 7 0 0 1 7-7" fill="none" stroke="#aaa" stroke-width="1.200"/><circle cx="14" cy="14" r="1.600" fill="#fff"/></svg>
    <svg class="t-green" width="20" height="20" viewBox="0 0 20 20"><circle cx="10" cy="10" r="10" fill="#f0c820"/><path d="M1 6c3 6 14 2 18-1-3-7-14-7-18 1zM19 14c-3-6-14-2-18 1 3 7 14 7 18-1z" fill="#1e9a4a"/><circle cx="10" cy="10" r="6" fill="#f0c820"/><path d="M10 6v8M6 10h8" stroke="#1e9a4a" stroke-width="2"/></svg>
    <svg class="t-qq" width="16" height="20" viewBox="0 0 16 20"><ellipse cx="8" cy="8" rx="5.500" ry="8" fill="#111"/><ellipse cx="8" cy="12" rx="4" ry="6" fill="#fff"/><circle cx="6" cy="5" r="1.300" fill="#fff"/><circle cx="10" cy="5" r="1.300" fill="#fff"/><path d="M1 9h14l-2 3-3 1v2H8v-2l-5-1z" fill="#e02020"/><path d="M3 18h4v2H3zM9 18h4v2H9z" fill="#f4b020"/></svg>
    <svg class="t-batt" width="20" height="13" viewBox="0 0 20 13"><rect x="4.500" y="2.500" width="14" height="9" fill="none" stroke="#fff"/><rect x="6" y="4" width="11" height="6" fill="#fff"/><path d="M0 3h4M2 0v6M19 5v4" stroke="#fff"/></svg>
    <svg class="t-spk" width="20" height="16" viewBox="0 0 20 16"><path d="M1 5h3l4-4v14l-4-4H1z" fill="none" stroke="#fff"/><path d="M11 5a4 4 0 0 1 0 6" fill="none" stroke="#ccc"/><path d="M14 3a7 7 0 0 1 0 10M17 1a10 10 0 0 1 0 14" fill="none" stroke="#777"/></svg>
    <span class="t-lang">英</span>
    <span class="t-ime">拼</span>
    <div class="clock"><span>17:25 周日</span><span>2022/12/4</span></div>
    <div class="notify">
      <svg width="20" height="17" viewBox="0 0 20 17"><path d="M0 0h20v14H6l-3 3v-3H0z" fill="#fff"/><path d="M4 4h12M4 7h12M4 10h8" stroke="#222"/></svg>
      <span class="badge">1</span>
    </div>
  </div>
</div>

</div>
</body>
</html>
```

FILE: styles.css
```css
* { box-sizing: border-box; }
html, body { margin: 0; padding: 0; }
body {
  width: 1920px; height: 1080px; overflow: hidden;
  font-family: "Noto Sans", "Noto Sans CJK SC", sans-serif;
  font-size: 15px; color: #222; background: #eceef0;
}
svg { display: block; flex: none; }
i { display: block; }
.app { display: flex; flex-direction: column; height: 1080px; }

/* title bar */
.titlebar { display: flex; align-items: center; height: 37px; background: #eceef0; flex: none; }
.qat { display: flex; align-items: center; width: 250px; padding-left: 2px; }
.q1 { margin-left: 6px; }
.q2 { margin-left: 9px; }
.q3 { margin-left: 9px; }
.q4 { margin-left: 9px; }
.q5 { margin-left: 8px; }
.q6 { margin-left: 12px; }
.q7 { margin-left: 9px; }
.q-sep { width: 1px; height: 22px; background: #c9ccd0; margin-left: 7px; }
.q8 { margin-left: 8px; }
.q9 { margin-left: 9px; }
.app-title { flex: 1; text-align: center; font-size: 16px; color: #3a3a3a; line-height: 37px; }
.win-controls { display: flex; width: 198px; padding-left: 9px; }
.wc { display: flex; width: 63px; justify-content: center; }

/* tabs */
.tabs { display: flex; align-items: stretch; height: 33px; background: #fff; flex: none; position: relative; }
.tab { padding: 0 15px; line-height: 33px; color: #333; }
.tab-file { width: 76px; padding: 0; text-align: center; background: #2b579a; color: #fff; }
.tab-active { color: #2b579a; border: 1px solid #c9c9c9; border-bottom: 0; width: 90px; padding: 0 14px; margin-bottom: -2px; background: #fafafa; position: relative; z-index: 1; }
.collapse { margin: 11px 6px 0 auto; }

/* ribbon */
.ribbon { display: flex; height: 101px; flex: none; background: #fafafa; border-top: 1px solid #cfcfcf; border-bottom: 1px solid #cfcfcf; border-left: 1px solid #d8d8d8; padding: 2px 0 2px; position: relative; }
.rgroup { display: flex; gap: 16px; border-right: 1px solid #bcbcbc; height: 94px; }
.g1 { width: 104px; padding-left: 15px; }
.g2 { width: 206px; padding-left: 10px; }
.g3 { width: 297px; padding-left: 13px; }
.ritem { display: flex; flex-direction: column; align-items: center; position: relative; }
.ritem > span { font-size: 15px; line-height: 22px; white-space: nowrap; color: #2a2a2a; position: absolute; top: 55px; }
.ritem { min-width: 30px; height: 94px; padding-top: 11px; }
.g1 .ritem { width: 76px; }
.g2 .ritem:first-child { width: 46px; }
.g3 .ritem { width: 90px; }
.g3 .ritem:last-child { width: 60px; }
.narrow { width: 30px; }
.ricon { flex: none; }
.more { position: absolute; top: 85px; }
.app-glyph { font: bold 14px "Liberation Sans", sans-serif; fill: #39506a; text-anchor: middle; }
.pill { position: absolute; right: 3px; top: 21px; width: 10px; height: 71px; border-radius: 5px; background: #5f5f5f; padding: 48px 1px 1px; }
.pill i { height: 21px; background: repeating-linear-gradient(#2fd35c 0 3px, #5f5f5f 3px 5px); }

/* left column */
.main { display: flex; flex: 1; min-height: 0; background: #e8eaed; }
.left { width: 601px; display: flex; flex-direction: column; background: #eceef0; flex: none; }
.browser-head { display: flex; align-items: center; height: 34px; flex: none; padding: 0 9px 4px 0; }
.browser-title { flex: 1; padding: 0 0 3px 5px; color: #7a7f85; }
.head-x { margin-left: 18px; }
.mini-tabs { display: flex; height: 18px; flex: none; align-items: flex-end; }
.mini-tab { width: 46px; height: 18px; line-height: 19px; text-align: center; font-size: 15px; color: #333; }
.mini-tab.on { background: #fff; border: 1px solid #b5b9bd; border-bottom: 0; border-radius: 2px 2px 0 0; margin-bottom: -1px; height: 19px; line-height: 18px; position: relative; z-index: 1; }
.tree { position: relative; height: 360px; flex: none; background: #fff; border: 1px solid #b5b9bd; border-radius: 2px; overflow: hidden; }
.tree-lines { position: absolute; left: 0; top: 0; }
.row { display: flex; align-items: center; height: 22px; position: relative; white-space: nowrap; color: #333; font-size: 15px; }
.row span { margin-top: -2px; }
.row .wide { letter-spacing: .24px; }
.row .ti { margin-right: 6px; }
.row .t16 { margin-right: 8px; }
.l1 { padding-left: 53px; }
.l2 { padding-left: 79px; }
.l3 { padding-left: 104px; }
.l4 { padding-left: 130px; }
.dim { color: #8c8c8c; }
.strong { font-weight: 700; color: #222; }
.exp { width: 14px; height: 14px; border: 1px solid #a8acb2; border-radius: 50%; background: #fff; margin-left: -23px; margin-right: 9px; position: relative; flex: none; }
.exp::after { content: ""; position: absolute; left: 2px; right: 2px; top: 5px; height: 2px; background: #6a7078; }
.sb-up { position: absolute; left: 588px; top: 21px; }
.sb-down { position: absolute; left: 588px; top: 350px; }
.sb-thumb { position: absolute; left: 589px; top: 194px; width: 6px; height: 154px; background: #a9adb1; }
.prop-head { display: flex; height: 25px; line-height: 26px; flex: none; margin-top: 6px; background: #adb1b4; border-bottom: 1px solid #7d8185; color: #333; }
.prop-a { width: 125px; padding-left: 12px; border-right: 1px solid #93979b; }
.prop-b { padding-left: 11px; }
.prop-body { flex: 1; background: #eceef0; border: 1px solid #b5b9bd; border-top: 0; border-radius: 0 0 2px 2px; }
.bottom-tabs { display: flex; height: 22px; flex: none; background: #fff; padding-left: 7px; align-items: flex-end; }
.btab { height: 20px; line-height: 21px; font-size: 15px; color: #333; }
.btab.on { width: 47px; margin-left: 7px; text-align: center; background: #adb1b4; border: 1px solid #7d8185; border-bottom: 0; }

/* toolbar */
.work { flex: 1; margin-left: 8px; display: flex; flex-direction: column; min-width: 0; }
.toolbar { display: flex; align-items: center; height: 36px; flex: none; background: #fafafa; }
.tsep { width: 1px; height: 30px; background: #c9ccd0; flex: none; }
.tsep.dotted { background: none; border-left: 1px dotted #666; }
.m3 { margin-left: 3px; } .m4 { margin-left: 4px; } .m5 { margin-left: 5px; } .m6 { margin-left: 6px; }
.m7 { margin-left: 7px; } .m8 { margin-left: 8px; } .m9 { margin-left: 9px; } .m11 { margin-left: 11px; }
.m12 { margin-left: 12px; } .m13 { margin-left: 13px; } .m14 { margin-left: 14px; } .m16 { margin-left: 16px; }
.m17 { margin-left: 17px; } .m18 { margin-left: 18px; } .m20 { margin-left: 20px; }
.axis-l { font: 8px "Liberation Sans", sans-serif; fill: #333; }
.time-label { width: 33px; font-size: 15px; color: #333; white-space: nowrap; }
.combo { display: flex; align-items: center; justify-content: space-between; height: 23px; background: #fff; border: 1px solid #a9adb2; border-radius: 2px; padding: 0 5px; font-size: 14px; color: #333; flex: none; }
.c79 { width: 79px; }
.c80 { width: 80px; }
.spin { width: 48px; }
.spin span { color: #8a5a20; }
.slider { position: relative; width: 84px; height: 23px; flex: none; }
.track { position: absolute; left: 0; top: 6px; right: 0; height: 4px; background: #e4e6e8; border: 1px solid #b0b4b8; }
.handle { position: absolute; right: 0; top: 8px; width: 13px; height: 11px; background: #f2f3f4; border: 1px solid #b0b4b8; }

/* viewport */
.viewport { position: relative; flex: 1; background: linear-gradient(#bccfe6, #ebedf0); overflow: hidden; }
.scene { position: absolute; left: 0; top: 0; }
.axis { position: absolute; font: bold 12px "Liberation Sans", sans-serif; line-height: 12px; }
.ax-x { left: 106px; top: 663px; color: #f00; }
.ax-y { left: 122px; top: 673px; color: #0f0; }
.ax-z { left: 113px; top: 713px; color: #22f; }
.legend { position: absolute; left: 1210px; top: 433px; width: 100px; }
.legend-title { font-family: "Liberation Sans", sans-serif; font-size: 16px; line-height: 18.500px; color: #222; white-space: nowrap; text-align: left; word-spacing: 2px; }
.legend-body { display: flex; margin-top: 11px; margin-left: 2px; }
.legend-bar { width: 15px; height: 274px; background:
  repeating-linear-gradient(rgba(0,0,0,.035) 0 7px, rgba(255,255,255,.035) 7px 14px),
  linear-gradient(#f00 0, #ff8000 14%, #ff0 25%, #0f0 50%, #0f8 60%, #0ff 73%, #08f 86%, #00f 97%);
  flex: none; }
.legend-vals { display: flex; flex-direction: column; justify-content: space-between; height: 289px; margin-top: -9px; margin-left: 3px; font: 11px/14px "DejaVu Sans", sans-serif; color: #222; }
.caption { position: absolute; left: 549px; top: 763px; font-size: 15px; line-height: 20px; letter-spacing: .1px; color: #222; white-space: nowrap; }

/* status */
.status { display: flex; justify-content: space-between; align-items: center; height: 33px; flex: none; background: #ebedef; border-top: 1px solid #aeb1b4; border-bottom: 1px solid #aeb1b4; padding: 0 2px 0 6px; }
.st-left { color: #777; font-size: 15px; letter-spacing: .2px; }
.st-right { color: #333; font-size: 15px; letter-spacing: .37px; }

/* taskbar */
.taskbar { display: flex; align-items: center; height: 50px; flex: none; background: #1c1c1c; color: #fff; }
.tk-win { margin-left: 20px; }
.tk-search { margin-left: 39px; }
.searchbox { display: flex; align-items: center; width: 275px; height: 43px; margin-left: 20px; background: #ebebeb; position: relative; padding-left: 8px; }
.ie-arrow { margin-left: 7px; }
.sb-text { margin-left: 5px; width: 155px; font-size: 15px; color: #111; white-space: nowrap; }
.sb-btn { position: absolute; right: 0; top: 0; width: 70px; height: 43px; line-height: 43px; text-align: center; background: #1e8cff; color: #fff; font-size: 15px; }
.tk-sep { width: 4px; height: 26px; border-left: 1px solid #555; border-right: 1px solid #555; margin-left: 8px; }
.tk-app { position: relative; display: flex; align-items: center; justify-content: center; height: 50px; width: 50px; flex: none; }
.a1 { margin-left: 20px; }
.a2 { margin-left: 11px; }
.a3 { margin-left: 12px; }
.a4 { margin-left: 12px; }
.a5 { margin-left: 7px; width: 61px; background: #4a4a4a; }
.under { position: absolute; left: 0; right: 0; bottom: 0; height: 2px; background: #7fbef0; }
.tray { display: flex; align-items: center; margin-left: auto; height: 50px; padding-right: 10px; position: relative; }
.t-chev { margin-left: 12px; }
.t-wifi { margin-left: 15px; }
.t-green { margin-left: 12px; }
.t-qq { margin-left: 10px; }
.t-batt { margin-left: 13px; }
.t-spk { margin-left: 8px; }
.t-lang { margin-left: 10px; font-size: 20px; width: 22px; text-align: center; color: #fff; }
.t-ime { margin-left: 17px; width: 18px; height: 18px; background: #fff; color: #000; font-size: 14px; line-height: 18px; text-align: center; }
.clock { display: flex; flex-direction: column; align-items: center; margin-left: 29px; width: 73px; font-size: 15px; line-height: 20px; white-space: nowrap; }
.notify { position: relative; margin-left: 29px; margin-right: 21px; margin-top: -6px; }
.badge { position: absolute; left: 9px; top: 8px; width: 20px; height: 20px; border-radius: 50%; background: #333; border: 1px solid #888; font-size: 13px; font-weight: 700; line-height: 18px; text-align: center; color: #fff; }
.tile-l { font: bold 11px "Liberation Sans", sans-serif; fill: #fff; text-anchor: middle; }
.help-q { font: bold 20px "Liberation Sans", sans-serif; fill: #fff; text-anchor: middle; }
```
